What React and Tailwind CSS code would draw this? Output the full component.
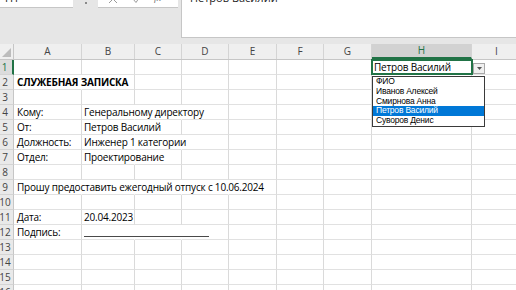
import React from "react";

const cols = [
  { key: "A", w: "w-[68px]" },
  { key: "B", w: "w-[53px]" },
  { key: "C", w: "w-[47px]" },
  { key: "D", w: "w-[47px]" },
  { key: "E", w: "w-[48px]" },
  { key: "F", w: "w-[47px]" },
  { key: "G", w: "w-[48px]" },
  { key: "H", w: "w-[100px]" },
  { key: "I", w: "w-[50px]" },
];

const sheet = {
  2: { A: { text: "СЛУЖЕБНАЯ ЗАПИСКА", bold: true, span: 2 } },
  4: { A: { text: "Кому:" }, B: { text: "Генеральному директору", span: 3 } },
  5: { A: { text: "От:" }, B: { text: "Петров Василий", span: 2 } },
  6: { A: { text: "Должность:" }, B: { text: "Инженер 1 категории", span: 3 } },
  7: { A: { text: "Отдел:" }, B: { text: "Проектирование", span: 2 } },
  9: { A: { text: "Прошу предоставить ежегодный отпуск с 10.06.2024", span: 5 } },
  11: { A: { text: "Дата:" }, B: { text: "20.04.2023" } },
  12: { A: { text: "Подпись:" }, B: { line: true, span: 3 } },
};

const names = ["ФИО", "Иванов Алексей", "Смирнова Анна", "Петров Василий", "Суворов Денис"];

function DropList() {
  return (
    <>
      <div className="absolute -left-[1px] -top-[1px] w-[102px] h-[16px] border-2 border-[#217346] pointer-events-none" />
      <div className="absolute left-[101px] top-[3px] w-[12px] h-[11px] bg-[#f0f0f0] border border-[#a8a8a8] flex items-center justify-center">
        <svg width="5" height="3" viewBox="0 0 5 3">
          <path d="M0 0h5L2.5 3z" fill="#555" />
        </svg>
      </div>
      <div className="absolute left-0 top-[16px] w-[113px] bg-white border border-[#3a3a3a] font-['Liberation_Sans',Arial,sans-serif]">
        {names.map((n) => (
          <div
            key={n}
            className={`h-[9.8px] flex items-center pl-[3px] text-[8.5px] leading-[9.8px] ${
              n === "Петров Василий" ? "bg-[#0078d7] text-white" : "text-black"
            }`}
          >
            {n}
          </div>
        ))}
      </div>
    </>
  );
}

function Row({ r }) {
  const data = sheet[r] || {};
  const hidden = new Set();
  cols.forEach((c, i) => {
    const cell = data[c.key];
    if (cell && cell.span) {
      for (let k = i; k < i + cell.span - 1; k++) hidden.add(k);
    }
  });

  return (
    <div className="flex h-[15px]">
      <div
        className={`w-[14px] shrink-0 border-b border-[#d4d4d4] flex items-center justify-center pr-[3px] text-[10px] ${
          r === 1
            ? "bg-[#dcdcdc] text-[#217346] border-r-2 border-r-[#217346]"
            : "bg-[#e9e9e9] text-[#444] border-r border-r-[#c6c6c6]"
        }`}
      >
        {r}
      </div>
      {cols.map((c, i) => {
        const cell = data[c.key];
        const isActive = r === 1 && c.key === "H";
        return (
          <div
            key={c.key}
            className={`${c.w} shrink-0 border-b border-r border-b-[#e1e1e1] flex items-center whitespace-nowrap text-[10px] tracking-[-0.2px] ${
              hidden.has(i) ? "border-r-transparent" : "border-r-[#dadada]"
            } ${c.key === "A" ? "pl-[3px]" : "pl-[2px]"} ${isActive ? "relative z-30" : ""}`}
          >
            {isActive && (
              <>
                <span>Петров Василий</span>
                <DropList />
              </>
            )}
            {cell && cell.text && <span className={cell.bold ? "font-bold" : ""}>{cell.text}</span>}
            {cell && cell.line && <div className="shrink-0 self-end mb-[2px] w-[125px] h-[1px] bg-[#4a4a4a]" />}
          </div>
        );
      })}
    </div>
  );
}

export default function App() {
  const rows = Array.from({ length: 16 }, (_, i) => i + 1);
  return (
    <div className="w-[516px] h-[290px] overflow-hidden bg-white font-['Open_Sans',sans-serif] text-black">
      {/* formula bar */}
      <div className="h-[44px] bg-[#e6e6e6] flex items-start">
        <div className="w-[73px] h-[8px] shrink-0 bg-white border-b border-[#c6c6c6] overflow-hidden pl-[5px]">
          <div className="-mt-[9px] text-[11px] leading-[13px] text-[#222]">H1</div>
        </div>
        <div className="w-[25px] shrink-0 flex justify-center pt-[2px]">
          <div className="w-[2px] h-[2px] bg-[#8a8a8a]" />
        </div>
        <div className="w-[80px] h-[8px] shrink-0 bg-white border-b border-[#c6c6c6] overflow-hidden flex items-start">
          <svg className="ml-[10px] -mt-[6px] shrink-0" width="10" height="10" viewBox="0 0 10 10">
            <path d="M1 1l8 8M9 1l-8 8" stroke="#9a9a9a" strokeWidth="1" />
          </svg>
          <svg className="ml-[14px] -mt-[6px] shrink-0" width="10" height="10" viewBox="0 0 10 10">
            <path d="M1 5l3 3.5L9 1" stroke="#9a9a9a" strokeWidth="1" fill="none" />
          </svg>
          <span className="ml-[12px] -mt-[8px] text-[10px] leading-[12px] italic text-[#777] font-['Liberation_Serif',serif]">
            fx
          </span>
        </div>
        <div className="w-[3px] shrink-0" />
        <div className="flex-1 h-[38px] bg-white border-l border-b border-[#c6c6c6] overflow-hidden pl-[8px]">
          <div className="-mt-[9px] text-[11px] leading-[13px] text-[#222]">Петров Василий</div>
        </div>
      </div>

      {/* column headers */}
      <div className="flex h-[16px] bg-[#efefef] border-b border-[#c6c6c6]">
        <div className="w-[14px] shrink-0 border-r border-[#c6c6c6] flex items-end justify-end p-[2px]">
          <svg width="9" height="9" viewBox="0 0 9 9">
            <path d="M9 0V9H0z" fill="#bcbcbc" />
          </svg>
        </div>
        {cols.map((c) => (
          <div
            key={c.key}
            className={`${c.w} shrink-0 border-r border-[#d4d4d4] flex items-center justify-center text-[10px] ${
              c.key === "H" ? "bg-[#d2d2d2] text-[#217346] border-b-2 border-b-[#217346]" : "text-[#444]"
            }`}
          >
            {c.key}
          </div>
        ))}
      </div>

      {rows.map((r) => (
        <Row key={r} r={r} />
      ))}
    </div>
  );
}
